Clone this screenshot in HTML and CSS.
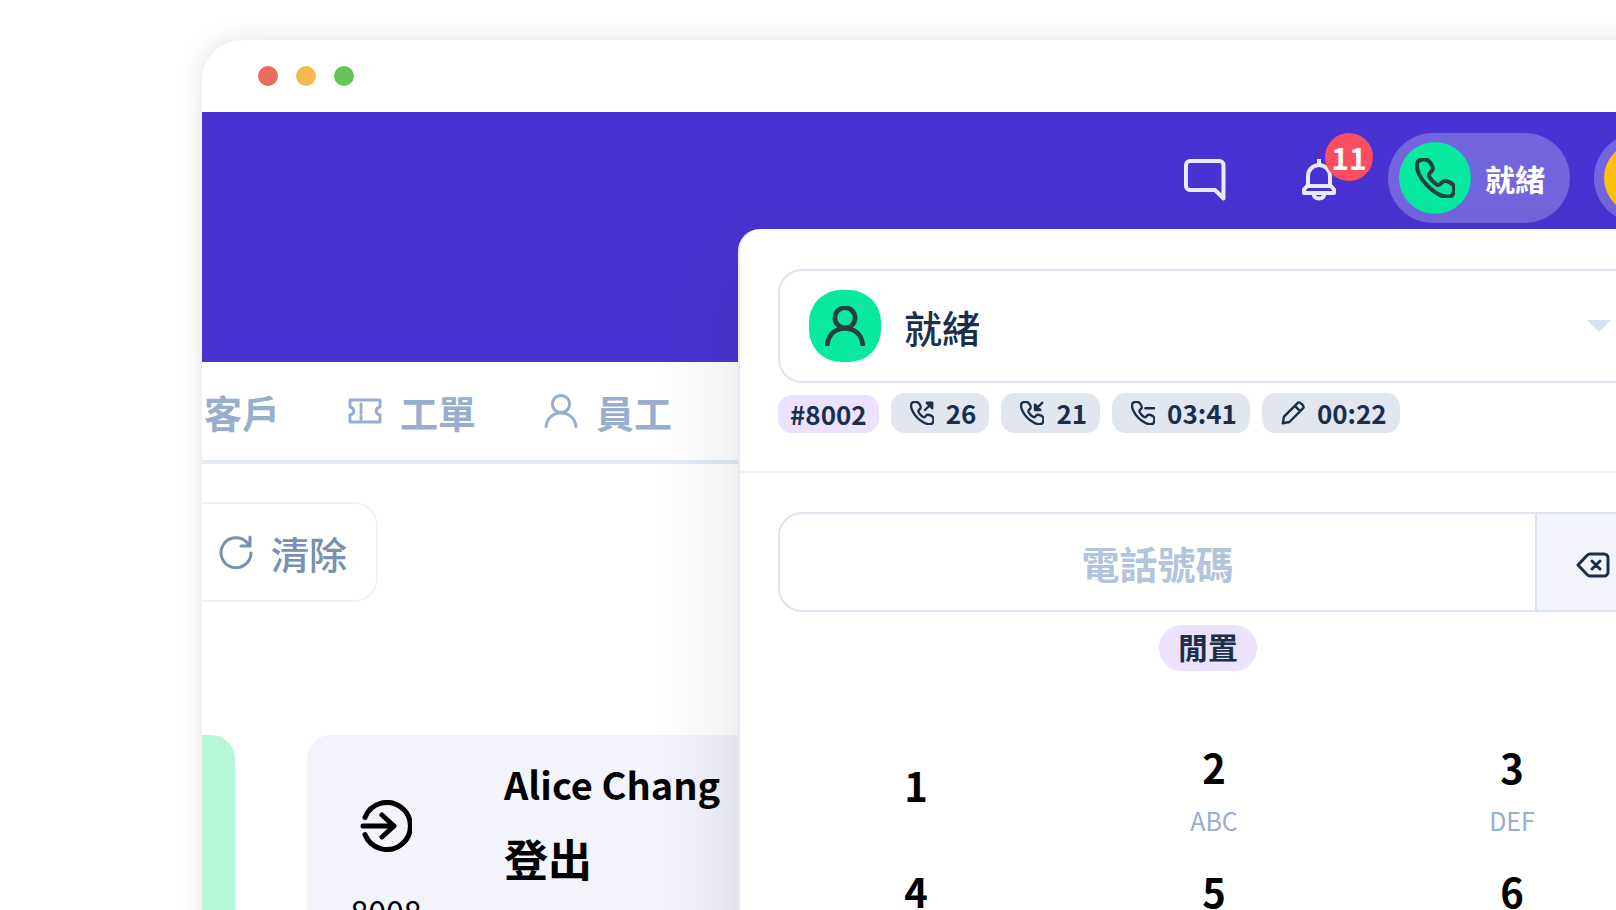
FILE: index.html
```html
<!DOCTYPE html>
<html lang="zh-Hant">
<head>
    <meta charset="UTF-8">
    <meta name="viewport" content="width=device-width, initial-scale=1.0">
    <title>客服中心</title>
    <link rel="stylesheet" href="styles.css">
</head>
<body>
    <!-- Shared icons -->
    <svg class="icon-defs" aria-hidden="true">
        <symbol id="icon-user" viewBox="0 0 34 34">
            <circle cx="17" cy="10" r="8.6"/>
            <path d="M2 32.500c1-8.500 7-13.500 15-13.500s14 5 15 13.500"/>
        </symbol>
        <symbol id="icon-phone" viewBox="0 0 40 40">
            <path d="M3 3.500C5.500 1 11 .8 13.500 2.800c2.500 2 5 6.500 4 9.200-.8 2-3.500 2.800-3.500 5 0 3 6.500 9.800 9.500 10 2.500.2 3-3.500 5.500-4 3-.6 8 2 9.500 4.500 1.300 2.500.5 8-1.500 10-2.500 2-9 1.300-13.500-1.200C15.500 31.800 7.500 23.500 4.200 16.500 2 12 1 6 3 3.500z"/>
        </symbol>
    </svg>

    <div class="window">
        <div class="title-bar">
            <span class="dot red"></span>
            <span class="dot yellow"></span>
            <span class="dot green"></span>
        </div>

        <header class="header">
            <button class="icon-button" aria-label="訊息">
                <svg class="icon-header" viewBox="0 0 42 42"><path d="M39.500 39.500l-8.500-8.500H6a4 4 0 0 1-4-4V6a4 4 0 0 1 4-4h29.500a4 4 0 0 1 4 4z"/></svg>
            </button>
            <button class="icon-button" aria-label="通知">
                <svg class="icon-header" viewBox="0 0 42 42">
                    <path d="M21 1v5M10 26V17a11 11 0 0 1 22 0v9l4 4.500V34H6v-3.500zM10 27h22M15.500 35c.5 3 2.500 4.500 5.500 4.500s5-1.500 5.500-4.500"/>
                </svg>
                <span class="count">11</span>
            </button>
            <button class="pill">
                <span class="pill-circle"><svg class="icon-phone"><use href="#icon-phone"/></svg></span>
                就緒
            </button>
            <button class="pill pill-profile" aria-label="帳號">
                <span class="pill-circle profile"></span>
            </button>
        </header>

        <nav class="tabs">
            <a href="#">客戶</a>
            <a href="#">
                <svg class="icon-tab" viewBox="0 0 34 34"><path d="M2 6h30v7c-5 1-5 7 0 8v7H2v-7c5-1 5-7 0-8zM13 10v3M13 15v4M13 22v3"/></svg>
                工單
            </a>
            <a href="#">
                <svg class="icon-tab"><use href="#icon-user"/></svg>
                員工
            </a>
        </nav>

        <main class="content">
            <button class="clear-button">
                <svg class="icon-tab" viewBox="0 0 34 34"><path d="M32 18A15 15 0 1 1 28 7.500L31 11M31 2v9h-9"/></svg>
                清除
            </button>

            <div class="cards">
                <div class="card card-ready"></div>
                <div class="card card-agent">
                    <div class="agent-side">
                        <svg class="icon-logout" viewBox="0 0 52 52"><path d="M5 17.500a23.500 23.500 0 1 1 0 17M3 26h31M22 15l12 11-12 11"/></svg>
                        <span>8008</span>
                    </div>
                    <div class="agent-info">
                        <div class="agent-name">Alice Chang</div>
                        <div class="agent-status">登出</div>
                    </div>
                </div>
            </div>
        </main>

        <!-- Dialer popup -->
        <section class="dialer">
            <div class="dialer-top">
                <div class="status-box">
                    <span class="status-avatar"><svg class="icon-user"><use href="#icon-user"/></svg></span>
                    <select class="status-select" aria-label="狀態">
                        <option>就緒</option>
                    </select>
                    <svg class="caret" viewBox="0 0 24 12"><path d="M0 0h24L12 12z"/></svg>
                </div>
                <div class="chips">
                    <span class="chip chip-extension">#8002</span>
                    <span class="chip">
                        <svg class="icon-chip" viewBox="0 0 40 40"><use href="#icon-phone" width="40" height="40"/><path d="M25 15L37 3M28 3h9v9z"/></svg>
                        26
                    </span>
                    <span class="chip">
                        <svg class="icon-chip" viewBox="0 0 40 40"><use href="#icon-phone" width="40" height="40"/><path d="M37 3L25 15M25 6v9h9z"/></svg>
                        21
                    </span>
                    <span class="chip">
                        <svg class="icon-chip" viewBox="0 0 40 40"><use href="#icon-phone" width="40" height="40"/><path d="M24 12h15"/></svg>
                        03:41
                    </span>
                    <span class="chip">
                        <svg class="icon-chip" viewBox="0 0 40 40"><path d="M3 37l2-11L28 3c3-3 12 6 9 9L14 35zM23 8l9 9"/></svg>
                        00:22
                    </span>
                </div>
            </div>

            <div class="dialer-body">
                <div class="phone-box">
                    <input class="phone-input" type="tel" placeholder="電話號碼" aria-label="電話號碼">
                    <button class="backspace" aria-label="刪除">
                        <svg class="icon-backspace" viewBox="0 0 34 26"><path d="M2 13L11 3.500Q12.500 2 14 2h14a4 4 0 0 1 4 4v14a4 4 0 0 1-4 4H14q-1.500 0-3-1.500zM16 9l8 8M24 9l-8 8"/></svg>
                    </button>
                </div>
                <span class="idle">閒置</span>

                <div class="keypad">
                    <button class="key">1</button>
                    <button class="key key-letters">2<small>ABC</small></button>
                    <button class="key key-letters">3<small>DEF</small></button>
                    <button class="key key-letters">4<small>GHI</small></button>
                    <button class="key key-letters">5<small>JKL</small></button>
                    <button class="key key-letters">6<small>MNO</small></button>
                </div>
            </div>
        </section>
    </div>
</body>
</html>
```
FILE: styles.css
```css
* {
    box-sizing: border-box;
}

body {
    margin: 0;
    height: 100vh;
    overflow: hidden;
    background-color: #fff;
    color: #1b2f4b;
    font-family: "Noto Sans CJK TC", sans-serif;
}

button, input, select {
    margin: 0;
    padding: 0;
    border: none;
    background: none;
    color: inherit;
    font-family: inherit;
}

button {
    cursor: pointer;
}

svg {
    flex-shrink: 0;
    fill: none;
    stroke: currentColor;
    stroke-width: 3;
    stroke-linecap: round;
    stroke-linejoin: round;
}

.icon-defs {
    position: absolute;
    width: 0;
    height: 0;
}

/* The window runs past the right and bottom edges */
.window {
    position: relative;
    margin: 40px -72px 0 202px;
    min-height: 100vh;
    background-color: #fff;
    border-radius: 40px 0 0 0;
    box-shadow: 0 0 24px rgba(0, 0, 0, 0.12);
}

.title-bar {
    display: flex;
    align-items: center;
    gap: 18px;
    height: 72px;
    padding-left: 56px;
}

.dot {
    width: 20px;
    height: 20px;
    border-radius: 50%;
}

.dot.red {
    background-color: #eb6b5f;
}

.dot.yellow {
    background-color: #f3bb4f;
}

.dot.green {
    background-color: #62c554;
}

/* Header */
.header {
    display: flex;
    justify-content: flex-end;
    align-items: flex-start;
    height: 250px;
    padding-top: 21px;
    background-color: #4833d2;
    color: #fff;
}

.icon-button {
    position: relative;
    display: flex;
    align-items: center;
    height: 94px;
    margin-right: 72px;
    color: #ece9fb;
}

.icon-button + .pill {
    margin-left: -24px;
}

.icon-header {
    width: 42px;
    height: 42px;
    stroke-width: 4;
}

.count {
    position: absolute;
    top: 0;
    left: 27px;
    width: 48px;
    height: 48px;
    border-radius: 50%;
    background-color: #fb4e62;
    color: #fff;
    font-size: 30px;
    font-weight: 700;
    line-height: 48px;
}

.pill {
    display: flex;
    align-items: center;
    gap: 14px;
    height: 90px;
    margin-right: 24px;
    padding: 0 25px 0 11px;
    border-radius: 45px;
    background-color: #7365dd;
    font-size: 30px;
    font-weight: 700;
    line-height: 40px;
}

.pill-circle {
    display: flex;
    align-items: center;
    justify-content: center;
    width: 72px;
    height: 72px;
    border-radius: 50%;
    background-color: #06e99e;
    color: #26403c;
}

.pill-profile {
    margin-right: 0;
    padding: 0 12px 0 10px;
}

.pill-circle.profile {
    background-color: #ffbf0c;
}

.icon-phone {
    width: 40px;
    height: 40px;
    stroke-width: 4;
}

/* Tabs */
.tabs {
    display: flex;
    align-items: center;
    gap: 68px;
    height: 102px;
    padding-left: 2px;
    border-bottom: 4px solid #e4ebf5;
}

.tabs a {
    display: flex;
    align-items: center;
    gap: 18px;
    color: #98aece;
    font-size: 38px;
    font-weight: 700;
    text-decoration: none;
}

.icon-tab {
    width: 34px;
    height: 34px;
    stroke-width: 3;
}

/* Content behind the dialer */
.content {
    padding-top: 38px;
}

.clear-button {
    display: flex;
    align-items: center;
    gap: 18px;
    height: 100px;
    padding: 0 29px 0 17px;
    border: 2px solid #f3f2fc;
    border-left: none;
    border-radius: 0 24px 24px 0;
    color: #7990b0;
    font-size: 38px;
    font-weight: 500;
}

.cards {
    display: flex;
    gap: 72px;
    margin-top: 133px;
}

.card {
    height: 240px;
}

.card-ready {
    width: 33px;
    border-radius: 0 24px 24px 0;
    background-color: #b6f7da;
}

.card-agent {
    display: flex;
    flex: 1;
    gap: 83px;
    padding: 19px 44px;
    border-radius: 24px;
    background-color: #f3f3fc;
    color: #000;
}

.agent-side {
    display: flex;
    flex-direction: column;
    align-items: center;
    gap: 36px;
    width: 70px;
    padding-top: 46px;
    font-size: 32px;
    line-height: 46px;
}

.icon-logout {
    width: 52px;
    height: 52px;
    stroke-width: 5;
}

.agent-name {
    font-size: 38px;
    font-weight: 700;
    line-height: 60px;
}

.agent-status {
    margin-top: 12px;
    font-size: 44px;
    font-weight: 700;
    line-height: 64px;
}

/* Dialer popup */
.dialer {
    position: absolute;
    top: 189px;
    right: 0;
    bottom: 0;
    width: 950px;
    border-left: 2px solid #e6edf8;
    border-radius: 22px 0 0 0;
    background-color: #fff;
    box-shadow: 0 40px 90px rgba(20, 40, 60, 0.14);
}

.dialer-top {
    padding: 40px 38px 38px;
    border-bottom: 2px solid #f3f2fc;
}

.status-box {
    position: relative;
    display: flex;
    align-items: center;
    height: 114px;
    border: 2px solid #dbe5f1;
    border-radius: 24px;
}

.status-avatar {
    position: absolute;
    left: 29px;
    display: flex;
    align-items: center;
    justify-content: center;
    width: 72px;
    height: 72px;
    border-radius: 32px;
    background-color: #06e99e;
    color: #26403c;
    pointer-events: none;
}

.icon-user {
    width: 40px;
    height: 40px;
    stroke-width: 4;
}

.status-select {
    flex: 1;
    height: 100%;
    padding-left: 124px;
    border-radius: 24px;
    appearance: none;
    font-size: 38px;
    font-weight: 500;
}

.caret {
    position: absolute;
    right: 37px;
    width: 24px;
    height: 12px;
    fill: #d5e1ee;
    stroke: none;
    pointer-events: none;
}

.chips {
    display: flex;
    align-items: flex-end;
    gap: 12px;
    margin-top: 10px;
}

.chip {
    display: flex;
    align-items: center;
    gap: 12px;
    height: 40px;
    padding: 0 13px 0 19px;
    border-radius: 14px;
    background-color: #e1e6ef;
    font-size: 26px;
    font-weight: 700;
    line-height: 38px;
}

.chip-extension {
    height: 38px;
    padding: 0 12px;
    background-color: #ece2fe;
    line-height: 36px;
}

.icon-chip {
    width: 24px;
    height: 24px;
    stroke-width: 4;
}

.dialer-body {
    display: flex;
    flex-direction: column;
    align-items: center;
    padding: 39px 38px 0;
}

.phone-box {
    display: flex;
    align-self: stretch;
    height: 100px;
    overflow: hidden;
    border: 2px solid #dbe5f1;
    border-radius: 24px;
}

.phone-input {
    flex: 1;
    min-width: 0;
    font-size: 38px;
    font-weight: 700;
    text-align: center;
}

.phone-input::placeholder {
    color: #b3c5dd;
    opacity: 1;
}

.backspace {
    display: flex;
    align-items: center;
    justify-content: center;
    width: 113px;
    padding-top: 5px;
    border-left: 2px solid #dbe5f1;
    background-color: #f3f3fc;
}

.icon-backspace {
    width: 34px;
    height: 26px;
}

.idle {
    margin: 13px 12px 0 0;
    padding: 0 19px 4px;
    border-radius: 23px;
    background-color: #ece2fe;
    font-size: 30px;
    font-weight: 700;
    line-height: 42px;
}

.keypad {
    display: grid;
    grid-template-columns: repeat(3, 298px);
    grid-auto-rows: 124px;
    margin-top: 52px;
}

.key {
    display: flex;
    flex-direction: column;
    align-items: center;
    justify-content: center;
    gap: 10px;
    color: #000;
    font-size: 40px;
    font-weight: 700;
    line-height: 50px;
}

.key-letters {
    padding-top: 10px;
}

.key small {
    color: #98aece;
    font-size: 25px;
    font-weight: 400;
    line-height: 36px;
}
```
